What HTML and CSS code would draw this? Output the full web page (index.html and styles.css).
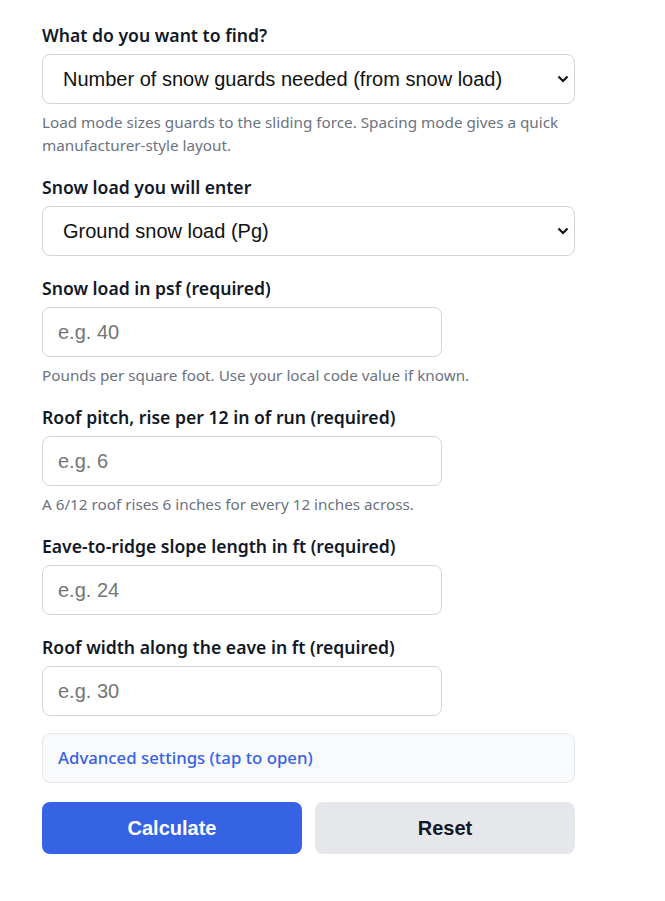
FILE: index.html
```html
<!DOCTYPE html>
<html lang="en">
<head>
  <meta charset="UTF-8" />
  <meta name="viewport" content="width=device-width, initial-scale=1" />
  <title>Snow Guard Calculator</title>
  <link rel="stylesheet" href="styles.css">
</head>
<body>
  <form class="calc" onsubmit="return false;">
    <div class="field">
      <label for="mode">What do you want to find?</label>
      <select id="mode" class="control">
        <option>Number of snow guards needed (from snow load)</option>
        <option>Snow guard spacing layout</option>
      </select>
      <p class="hint">Load mode sizes guards to the sliding force. Spacing mode gives a quick manufacturer-style layout.</p>
    </div>

    <div class="field">
      <label for="loadType">Snow load you will enter</label>
      <select id="loadType" class="control">
        <option>Ground snow load (Pg)</option>
        <option>Roof snow load (Pf)</option>
      </select>
    </div>

    <div class="field">
      <label for="load">Snow load in psf (required)</label>
      <input id="load" class="control short" type="text" placeholder="e.g. 40">
      <p class="hint">Pounds per square foot. Use your local code value if known.</p>
    </div>

    <div class="field">
      <label for="pitch">Roof pitch, rise per 12 in of run (required)</label>
      <input id="pitch" class="control short" type="text" placeholder="e.g. 6">
      <p class="hint">A 6/12 roof rises 6 inches for every 12 inches across.</p>
    </div>

    <div class="field">
      <label for="slope">Eave-to-ridge slope length in ft (required)</label>
      <input id="slope" class="control short" type="text" placeholder="e.g. 24">
    </div>

    <div class="field">
      <label for="width">Roof width along the eave in ft (required)</label>
      <input id="width" class="control short" type="text" placeholder="e.g. 30">
    </div>

    <details class="advanced">
      <summary>Advanced settings (tap to open)</summary>
    </details>

    <div class="actions">
      <button type="submit" class="btn primary">Calculate</button>
      <button type="reset" class="btn secondary">Reset</button>
    </div>
  </form>
</body>
</html>
```

FILE: styles.css
```css
body {
  font-family: 'Segoe UI', 'Noto Sans', sans-serif;
  background: #fff;
  color: #111827;
  margin: 0;
  padding: 23px 42px;
}
.calc {
  width: 533px;
}
.field {
  margin-bottom: 20px;
}
.field label {
  display: block;
  font-size: 17.6px;
  font-weight: 600;
  line-height: 24px;
  margin-bottom: 7px;
}
.control {
  box-sizing: border-box;
  display: block;
  width: 100%;
  height: 50px;
  padding: 0 15px;
  border: 1px solid #d1d5db;
  border-radius: 8px;
  background: #fff;
  font-family: 'Liberation Sans', Arial, sans-serif;
  font-size: 20px;
  color: #111;
}
select.control {
  padding-left: 20px;
  -webkit-appearance: none;
  appearance: none;
  background: #fff url("data:image/svg+xml,%3Csvg xmlns='http://www.w3.org/2000/svg' width='12' height='8' viewBox='0 0 12 8'%3E%3Cpath d='M1.5 1.5l4.5 4.5 4.5-4.5' fill='none' stroke='%23111' stroke-width='2.2'/%3E%3C/svg%3E") no-repeat right 5px center;
}
.control.short {
  width: 400px;
}
.control::placeholder {
  color: #757575;
}
.hint {
  margin: 7px 0 -2px;
  font-size: 15.25px;
  line-height: 23px;
  color: #6b7280;
}
.advanced {
  box-sizing: border-box;
  height: 50px;
  border: 1px solid #e5e7eb;
  border-radius: 8px;
  background: #f9fafb;
  margin: -3px 0 19px;
}
.advanced summary {
  list-style: none;
  padding: 0 15px;
  line-height: 48px;
  font-size: 16.8px;
  font-weight: 500;
  color: #3563e3;
  cursor: pointer;
}
.advanced summary::-webkit-details-marker {
  display: none;
}
.actions {
  display: flex;
  gap: 13px;
}
.btn {
  flex: 1;
  height: 52px;
  border: none;
  border-radius: 8px;
  font-family: 'Liberation Sans', Arial, sans-serif;
  font-size: 20px;
  font-weight: bold;
  cursor: pointer;
}
.primary {
  background: #3563e3;
  color: #fff;
}
.secondary {
  background: #e5e7eb;
  color: #111827;
}
```
